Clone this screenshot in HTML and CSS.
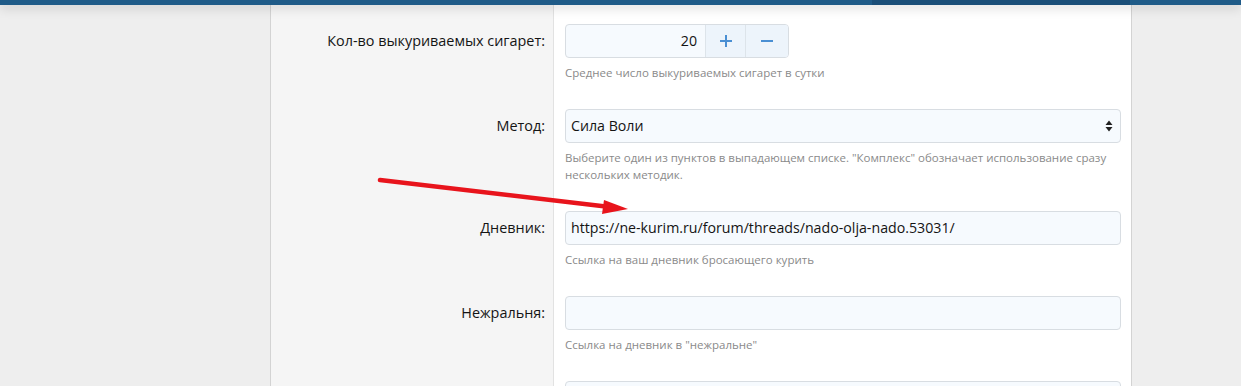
FILE: index.html
```html
<!DOCTYPE html>
<html lang="ru">
  <head>
    <meta charset="UTF-8" />
    <meta name="viewport" content="width=device-width, initial-scale=1.0" />
    <title>Профиль бросающего</title>
    <link rel="stylesheet" href="styles.css">
  </head>

  <body>
    <div class="top-bar">
      <div class="top-bar-nav"></div>
    </div>

    <div class="page">
      <div class="form-block">
        <div class="form-row">
          <div class="form-label">Кол-во выкуриваемых сигарет:</div>
          <div class="form-field">
            <div class="number-box">
              <div class="number-value">20</div>
              <div class="number-btn">
                <svg width="14" height="14" viewBox="0 0 14 14"><path d="M7 1v12M1 7h12" stroke="#4a8fd3" stroke-width="2"/></svg>
              </div>
              <div class="number-btn number-btn-last">
                <svg width="14" height="14" viewBox="0 0 14 14"><path d="M1 7h12" stroke="#4a8fd3" stroke-width="2"/></svg>
              </div>
            </div>
            <div class="hint">Среднее число выкуриваемых сигарет в сутки</div>
          </div>
        </div>

        <div class="form-row">
          <div class="form-label">Метод:</div>
          <div class="form-field">
            <div class="text-box select-box">
              <span>Сила Воли</span>
              <svg width="8" height="12" viewBox="0 0 8 12"><path d="M4 0.5L7.5 5H0.5z M4 11.5L7.5 7H0.5z" fill="#222"/></svg>
            </div>
            <div class="hint">Выберите один из пунктов в выпадающем списке. "Комплекс" обозначает использование сразу нескольких методик.</div>
          </div>
        </div>

        <div class="form-row">
          <div class="form-label">Дневник:</div>
          <div class="form-field">
            <div class="text-box">https://ne-kurim.ru/forum/threads/nado-olja-nado.53031/</div>
            <div class="hint">Ссылка на ваш дневник бросающего курить</div>
          </div>
        </div>

        <div class="form-row">
          <div class="form-label">Нежральня:</div>
          <div class="form-field">
            <div class="text-box"></div>
            <div class="hint">Ссылка на дневник в "нежральне"</div>
          </div>
        </div>

        <div class="form-row">
          <div class="form-label"></div>
          <div class="form-field">
            <div class="text-box"></div>
          </div>
        </div>
      </div>
    </div>

    <!-- red annotation arrow drawn over the screenshot -->
    <svg class="annotation" width="1241" height="386" viewBox="0 0 1241 386">
      <line x1="380" y1="180" x2="610" y2="207" stroke="#e8141c" stroke-width="4.5" stroke-linecap="round"/>
      <polygon points="628,209 604,200 602,214" fill="#e8141c"/>
    </svg>
  </body>
</html>
```

FILE: styles.css
```css
body {
  margin: 0;
  background-color: #eeeeee;
  font-family: "Open Sans", "Noto Sans", Arial, sans-serif;
  color: #141414;
  height: 386px;
  overflow: hidden;
}

.top-bar {
  position: relative;
  z-index: 2;
  height: 5px;
  background-color: #1f5b88;
  box-shadow: 0 2px 12px rgba(0, 0, 0, 0.22);
}

.top-bar-nav {
  margin-left: 872px;
  width: 258px;
  height: 5px;
  background-color: #1a4e78;
}

.page {
  display: flex;
  justify-content: flex-start;
  padding-left: 270px;
}

.form-block {
  width: 860px;
  border-left: 1px solid #d3d3d3;
  border-right: 1px solid #d3d3d3;
  background-color: #fff;
  min-height: 400px;
}

.form-row {
  display: flex;
}

.form-label {
  box-sizing: border-box;
  width: 283px;
  flex-shrink: 0;
  padding: 19px 8px 9px 0;
  background-color: #f5f5f5;
  border-right: 1px solid #e2e2e2;
  text-align: right;
  font-size: 14.4px;
  line-height: 34px;
}

.form-field {
  flex: 1;
  padding: 19px 10px 9px 11px;
}

.text-box {
  box-sizing: border-box;
  height: 34px;
  padding: 0 7px 0 5px;
  border: 1px solid #d8dde2;
  border-radius: 4px;
  background-color: #f6fafe;
  font-size: 14.2px;
  line-height: 32px;
  white-space: nowrap;
}

.select-box {
  display: flex;
  justify-content: space-between;
  align-items: center;
}

.number-box {
  display: flex;
  width: 224px;
  height: 34px;
  box-sizing: border-box;
  border: 1px solid #d8dde2;
  border-radius: 4px;
  background-color: #f6fafe;
  overflow: hidden;
}

.number-value {
  flex: 1;
  padding-right: 8px;
  text-align: right;
  font-size: 14.2px;
  line-height: 32px;
}

.number-btn {
  width: 39px;
  display: flex;
  align-items: center;
  justify-content: center;
  border-left: 1px solid #dde4ea;
  background-color: #edf4fb;
}

.number-btn-last {
  width: 42px;
}

.hint {
  margin-top: 6px;
  font-size: 11.5px;
  line-height: 17px;
  color: #8a8a8a;
}

.annotation {
  position: absolute;
  top: 0;
  left: 0;
  pointer-events: none;
}
```
